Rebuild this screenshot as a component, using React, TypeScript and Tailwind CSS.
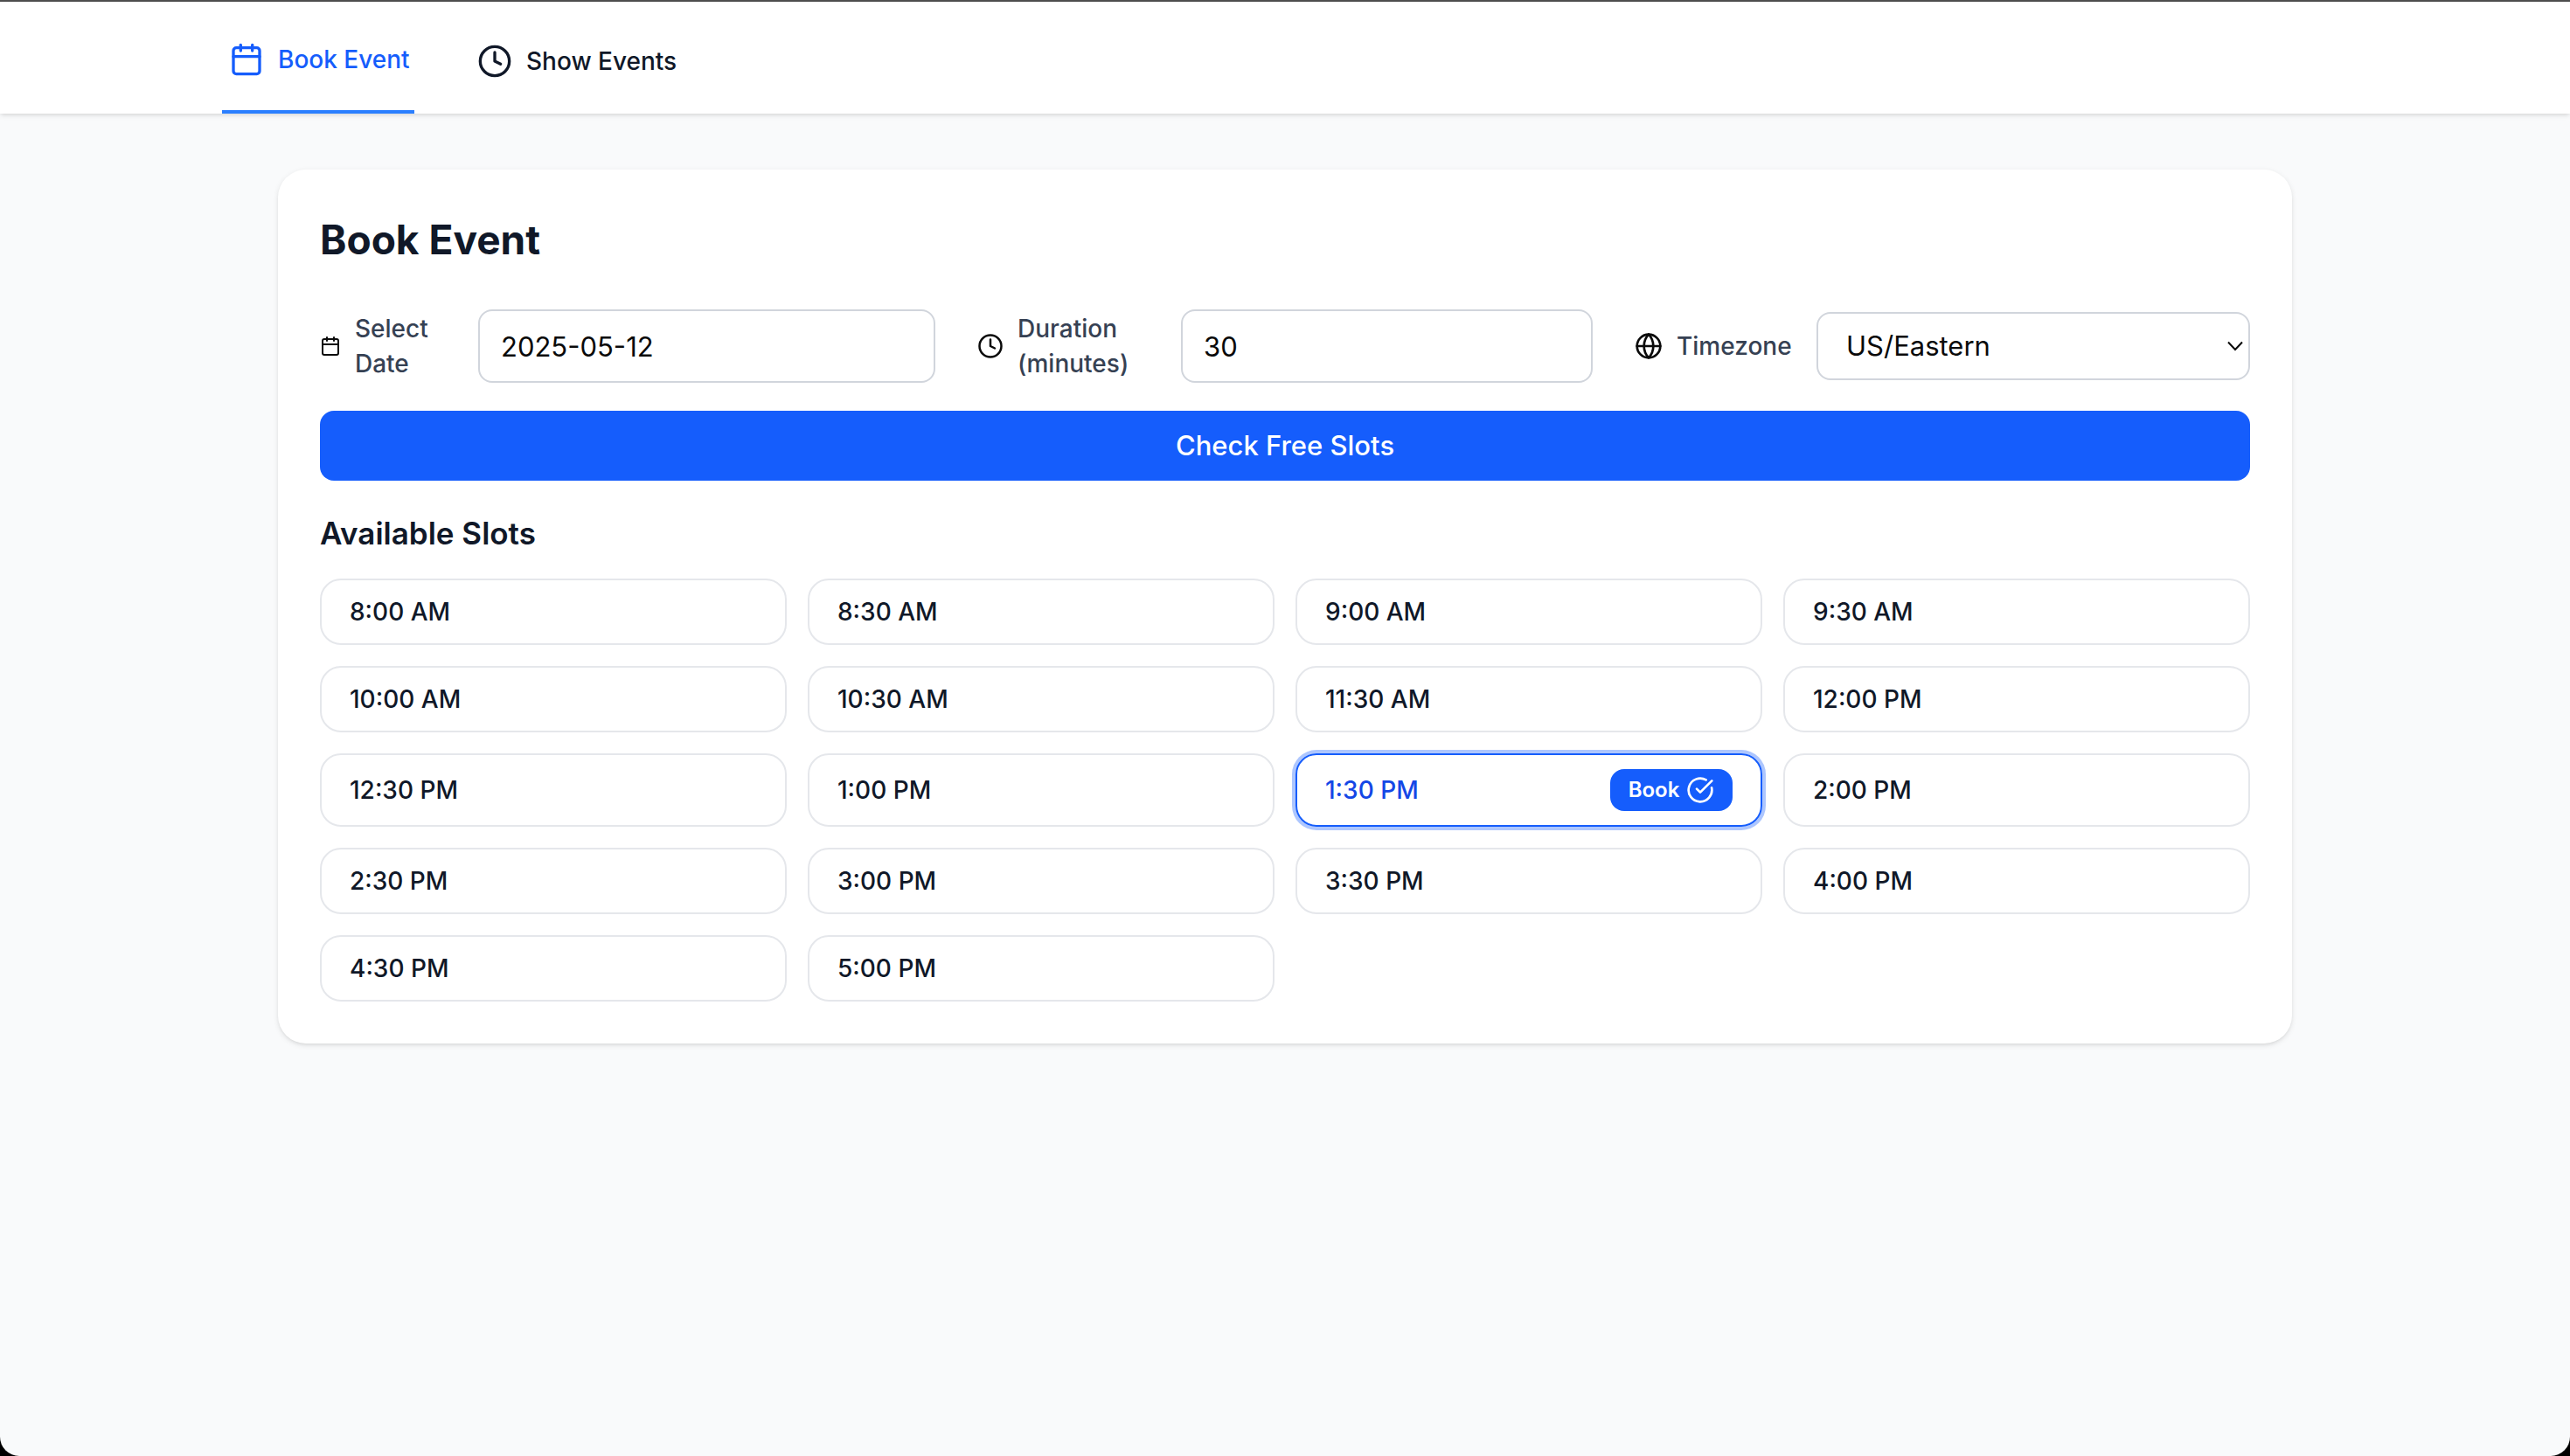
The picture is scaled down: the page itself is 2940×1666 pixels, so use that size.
import { useState } from "react";
import { Calendar, CircleCheckBig, Clock, Globe } from "lucide-react";

const slots = [
  "8:00 AM", "8:30 AM", "9:00 AM", "9:30 AM",
  "10:00 AM", "10:30 AM", "11:30 AM", "12:00 PM",
  "12:30 PM", "1:00 PM", "1:30 PM", "2:00 PM",
  "2:30 PM", "3:00 PM", "3:30 PM", "4:00 PM",
  "4:30 PM", "5:00 PM",
];

function Nav() {
  return (
    <nav className="border-t-2 border-[#4d4d4d] bg-white shadow-[0_2px_6px_rgba(0,0,0,0.1),0_2px_4px_-2px_rgba(0,0,0,0.1)]">
      <div className="mx-auto flex h-32 max-w-[2560px] gap-16 px-16 text-[28px] leading-10 font-medium whitespace-nowrap">
        <a href="#book" className="flex w-[220px] items-center gap-4 border-b-4 border-blue-500 px-2 pt-2 text-blue-600">
          <Calendar size={40} className="shrink-0" />
          Book Event
        </a>
        <a href="#events" className="flex items-center gap-4 px-2 pt-2 text-gray-900">
          <Clock size={40} className="shrink-0" />
          Show Events
        </a>
      </div>
    </nav>
  );
}

function Filters() {
  const label = "text-[28px] leading-10 font-medium text-gray-700";
  const input = "h-[84px] min-w-0 flex-1 rounded-2xl border-2 border-gray-300 bg-white px-6 text-[31px]";
  return (
    <div className="grid grid-cols-3 items-center gap-12">
      <div className="flex items-center">
        <Calendar size={24} className="mr-4 shrink-0" />
        <label htmlFor="date" className={`${label} mr-8 w-[109px]`}>Select Date</label>
        <input id="date" type="text" defaultValue="2025-05-12" className={input} />
      </div>
      <div className="flex items-center">
        <Clock size={30} className="mr-4 shrink-0" />
        <label htmlFor="duration" className={`${label} mr-8 w-[155px]`}>Duration (minutes)</label>
        <input id="duration" type="text" inputMode="numeric" defaultValue="30" className={input} />
      </div>
      <div className="flex items-center">
        <Globe size={32} className="mr-4 shrink-0" />
        <label htmlFor="timezone" className={`${label} mr-8 w-32`}>Timezone</label>
        <div className="relative min-w-0 flex-1">
          <select id="timezone" defaultValue="US/Eastern" className="h-[78px] w-full appearance-none rounded-2xl border-2 border-gray-300 bg-white px-8 text-[31px]">
            <option>US/Eastern</option>
            <option>US/Central</option>
            <option>US/Pacific</option>
          </select>
          <svg viewBox="0 0 18 12" className="pointer-events-none absolute inset-y-0 right-2 my-auto h-3 w-[18px]" fill="none" stroke="currentColor" strokeWidth="2">
            <path d="M1 1.5 9 10l8-8.5" />
          </svg>
        </div>
      </div>
    </div>
  );
}

export default function App() {
  const [selected, setSelected] = useState("1:30 PM");
  return (
    <div className="bg-black font-['Inter',sans-serif] text-neutral-950">
      <div className="min-h-screen overflow-hidden rounded-b-[22px] bg-gray-50">
        <Nav />
        <main className="mx-auto mt-16 max-w-[2304px] rounded-[32px] bg-white p-12 shadow-[0_2px_6px_rgba(0,0,0,0.1),0_2px_4px_-2px_rgba(0,0,0,0.1)]">
          <h1 className="mb-12 text-[46px] leading-[64px] font-bold text-gray-900">Book Event</h1>
          <Filters />
          <button type="button" className="mt-8 h-20 w-full rounded-2xl bg-blue-600 text-[31px] font-medium text-white">
            Check Free Slots
          </button>
          <h2 className="mt-8 mb-6 text-[35px] leading-[56px] font-semibold text-gray-900">Available Slots</h2>
          <ul className="grid grid-cols-4 gap-6 text-[28px] leading-10 font-medium text-gray-900">
            {slots.map((slot) =>
              slot === selected ? (
                <li key={slot} className="flex items-center justify-between rounded-3xl border-2 border-blue-600 px-8 py-4 text-blue-700 ring-4 ring-blue-600/35">
                  {slot}
                  <button type="button" className="flex h-12 w-[140px] items-center justify-center gap-2 rounded-2xl bg-blue-600 text-[24px] font-semibold text-white">
                    Book
                    <CircleCheckBig size={32} />
                  </button>
                </li>
              ) : (
                <li key={slot} className="flex">
                  <button type="button" onClick={() => setSelected(slot)} className="flex flex-1 items-center rounded-3xl border-2 border-gray-200 px-8 py-4">
                    {slot}
                  </button>
                </li>
              ),
            )}
          </ul>
        </main>
      </div>
    </div>
  );
}
